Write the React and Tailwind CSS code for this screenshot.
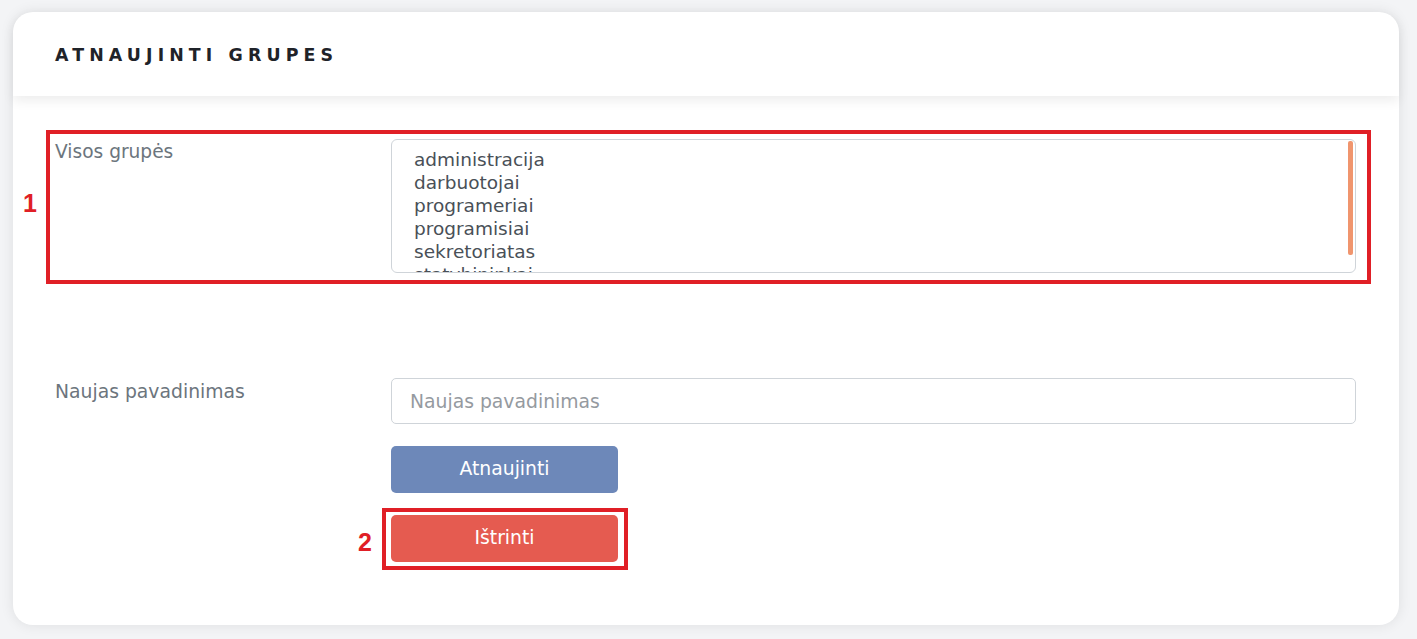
import React from "react";

const groups = [
  "administracija",
  "darbuotojai",
  "programeriai",
  "programisiai",
  "sekretoriatas",
  "statybininkai",
];

export default function App() {
  return (
    <div
      className="min-h-[639px] w-full bg-[#f3f4f6] pt-[12px] pb-[14px]"
      style={{ fontFamily: '"DejaVu Sans", "Noto Sans", sans-serif' }}
    >
      <div className="ml-[13px] w-[1386px] rounded-[20px] bg-white shadow-[0_0_14px_rgba(0,0,0,0.09)]">
        <div className="relative flex h-[84px] items-center rounded-t-[20px] pl-[42px] pt-[3px] shadow-[0_5px_12px_rgba(0,0,0,0.07)]">
          <h1 className="text-[17.4px] font-bold tracking-[5.1px] text-[#1f2329]">
            ATNAUJINTI GRUPES
          </h1>
        </div>

        <div className="px-[42px] pt-[43px] pb-[63px]">
          <div className="relative flex">
            <span className="absolute left-[-32px] top-[52px] text-[25px] font-black leading-none text-[#e01f26] [font-family:'Liberation_Sans',sans-serif]">
              1
            </span>
            <div className="pointer-events-none absolute -left-[9px] -top-[9px] -right-[14px] -bottom-[11px] border-4 border-[#e01f26]" />
            <label className="w-[336px] text-[18.6px] leading-[26px] text-[#6c757d]">
              Visos grupės
            </label>
            <div className="relative h-[134px] w-[965px] overflow-hidden rounded-[6px] border border-[#cfd4d9] bg-white pl-[22px] pt-[8px]">
              {groups.map((g) => (
                <div key={g} className="text-[18.5px] leading-[23px] text-[#495057]">
                  {g}
                </div>
              ))}
              <div className="absolute right-[2px] top-[1px] h-[114px] w-[5px] rounded-[2px] bg-[#f0956e]" />
            </div>
          </div>

          <div className="mt-[105px] flex">
            <label className="w-[336px] pt-[1px] text-[18.8px] leading-[26px] text-[#6c757d]">
              Naujas pavadinimas
            </label>
            <div className="flex w-[965px] flex-col items-start">
              <input
                className="h-[46px] w-full rounded-[5px] border border-[#cfd4d9] bg-white pl-[18px] text-[18.8px] text-[#495057] outline-none placeholder:text-[#959a9f]"
                placeholder="Naujas pavadinimas"
              />
              <button className="mt-[22px] h-[47px] w-[227px] rounded-[5px] bg-[#6d88b9] text-[18.8px] text-white">
                Atnaujinti
              </button>
              <div className="relative mt-[22px]">
                <span className="absolute left-[-33px] top-[15px] text-[25px] font-black leading-none text-[#e01f26] [font-family:'Liberation_Sans',sans-serif]">
                  2
                </span>
                <div className="pointer-events-none absolute -left-[9px] -top-[7px] -right-[10px] -bottom-[8px] border-4 border-[#e01f26]" />
                <button className="h-[47px] w-[227px] rounded-[5px] bg-[#e55b50] text-[18.8px] text-white">
                  Ištrinti
                </button>
              </div>
            </div>
          </div>
        </div>
      </div>
    </div>
  );
}
